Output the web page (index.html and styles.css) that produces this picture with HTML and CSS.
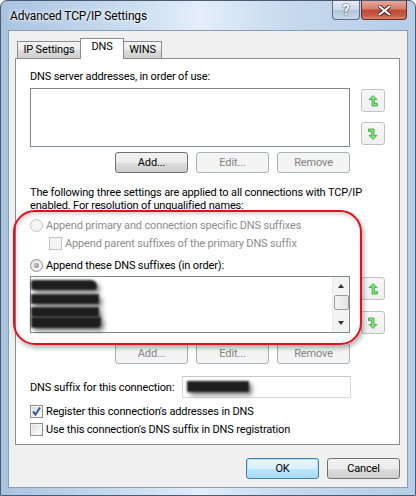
FILE: index.html
```html
<!DOCTYPE html>
<html lang="en">
<head>
    <meta charset="UTF-8">
    <title>Advanced TCP/IP Settings</title>
    <link rel="stylesheet" href="styles.css">
</head>
<body>
    <div class="window">
        <!-- Title bar -->
        <div class="titlebar">
            <span class="title">Advanced TCP/IP Settings</span>
            <div class="caption-buttons">
                <div class="cap-btn help">?</div>
                <div class="cap-btn close">
                    <svg width="13" height="11" viewBox="0 0 13 11">
                        <path d="M1 1 L12 10 M12 1 L1 10" stroke="#5a1a1a" stroke-width="4" stroke-linecap="round"/>
                        <path d="M1.5 1.5 L11.5 9.5 M11.5 1.5 L1.5 9.5" stroke="#fff" stroke-width="2.2" stroke-linecap="round"/>
                    </svg>
                </div>
            </div>
        </div>

        <div class="client">
            <!-- Tabs -->
            <div class="tabs">
                <div class="tab">IP Settings</div>
                <div class="tab active-tab">DNS</div>
                <div class="tab">WINS</div>
            </div>

            <div class="tab-page">
                <div class="label">DNS server addresses, in order of use:</div>
                <div class="list-row">
                    <div class="listbox"></div>
                    <div class="arrows first">
                        <div class="arrow-btn">
                            <svg width="10" height="12" viewBox="0 0 10 12"><path class="arrow-up" d="M5 0.5 L9 4.5 L6.5 4.5 L6.5 8.5 L9.5 8.5 L9.5 11 L4 11 L4 4.5 L1 4.5 Z"/></svg>
                        </div>
                        <div class="arrow-btn">
                            <svg width="10" height="12" viewBox="0 0 10 12"><path class="arrow-up" d="M5 11.5 L1 7.5 L3.5 7.5 L3.5 3.5 L0.5 3.5 L0.5 1 L6 1 L6 7.5 L9 7.5 Z"/></svg>
                        </div>
                    </div>
                </div>
                <div class="btn-row">
                    <div class="btn">Add...</div>
                    <div class="btn disabled">Edit...</div>
                    <div class="btn disabled">Remove</div>
                </div>

                <p class="note">The following three settings are applied to all connections with TCP/IP<br>enabled. For resolution of unqualified names:</p>

                <div class="option first-option disabled"><span class="radio"></span>Append primary and connection specific DNS suffixes</div>
                <div class="option sub disabled"><span class="check"></span>Append parent suffixes of the primary DNS suffix</div>
                <div class="option third-option"><span class="radio selected"></span>Append these DNS suffixes (in order):</div>

                <div class="list-row second">
                    <div class="listbox short">
                        <div class="suffixes">
                            <span class="blob b1"></span>
                            <span class="blob b2"></span>
                            <span class="blob b3"></span>
                            <span class="blob b4"></span>
                        </div>
                        <div class="scrollbar">
                            <span class="sb-up"></span>
                            <span class="sb-thumb"></span>
                            <span class="sb-down"></span>
                        </div>
                    </div>
                    <div class="arrows second">
                        <div class="arrow-btn">
                            <svg width="10" height="12" viewBox="0 0 10 12"><path class="arrow-up" d="M5 0.5 L9 4.5 L6.5 4.5 L6.5 8.5 L9.5 8.5 L9.5 11 L4 11 L4 4.5 L1 4.5 Z"/></svg>
                        </div>
                        <div class="arrow-btn">
                            <svg width="10" height="12" viewBox="0 0 10 12"><path class="arrow-up" d="M5 11.5 L1 7.5 L3.5 7.5 L3.5 3.5 L0.5 3.5 L0.5 1 L6 1 L6 7.5 L9 7.5 Z"/></svg>
                        </div>
                    </div>
                </div>
                <div class="btn-row second">
                    <div class="btn disabled">Add...</div>
                    <div class="btn disabled">Edit...</div>
                    <div class="btn disabled">Remove</div>
                </div>

                <div class="suffix-row">
                    <span>DNS suffix for this connection:</span>
                    <div class="textbox"><span class="blob b5"></span></div>
                </div>

                <div class="option check-row first-check"><span class="check checked">
                    <svg width="11" height="11" viewBox="0 0 11 11"><path d="M2 5.5 L4.5 8.5 L9 1.5" fill="none" stroke="#3b5aa5" stroke-width="2"/></svg>
                </span>Register this connection's addresses in DNS</div>
                <div class="option check-row"><span class="check"></span>Use this connection's DNS suffix in DNS registration</div>

                <!-- red annotation drawn over the suffix settings -->
                <div class="annotation"></div>
            </div>

            <div class="footer">
                <div class="btn default">OK</div>
                <div class="btn">Cancel</div>
            </div>
        </div>
    </div>
</body>
</html>
```

FILE: styles.css
```css
/* Basic reset */
* {
    margin: 0;
    padding: 0;
    box-sizing: border-box;
}

body {
    width: 416px;
    height: 496px;
    font-family: Roboto, "Liberation Sans", sans-serif;
    font-size: 11px;
    letter-spacing: -0.15px;
    color: #000;
    background: #fff;
    white-space: nowrap;
}

/* Window frame */
.window {
    width: 416px;
    height: 496px;
    display: flex;
    flex-direction: column;
    border: 1px solid #4a5a70;
    border-radius: 7px 7px 0 0;
    background: linear-gradient(to right, #a9c3df 0%, #c9dcf0 30%, #e3eef9 48%, #c6d9ee 70%, #b5cde8 100%);
}

.titlebar {
    height: 29px;
    display: flex;
    align-items: flex-start;
    justify-content: space-between;
}

.title {
    margin-top: 8px;
    margin-left: 9px;
    font-size: 12px;
    text-shadow: 0 0 6px #fff, 0 0 3px #fff;
}

.caption-buttons {
    display: flex;
    gap: 1px;
    margin-right: 8px;
}

.cap-btn {
    height: 19px;
    display: flex;
    align-items: center;
    justify-content: center;
    border: 1px solid #5d6f86;
    border-top: none;
    border-radius: 0 0 4px 4px;
}

.help {
    width: 28px;
    background: linear-gradient(#e6eef8, #cad8e9 50%, #b3c5dc 51%, #c7d7ea);
    color: #fff;
    font-size: 14px;
    font-weight: bold;
    text-shadow: 0 0 2px #3a4a60, 0 0 1px #3a4a60;
}

.close {
    width: 46px;
    border-color: #6a2a28;
    background: linear-gradient(#e7a99c, #d27c6c 45%, #c0483a 50%, #c65a44 80%, #d6876a);
}

/* Client area */
.client {
    flex: 1;
    margin: 0 7px 7px;
    background: #f0f0f0;
    border: 1px solid #8a9cb4;
    padding: 7px 7px 8px 6px;
    display: flex;
    flex-direction: column;
}

.tabs {
    display: flex;
    align-items: flex-end;
    height: 20px;
    padding-left: 2px;
}

.tab {
    height: 17px;
    line-height: 15px;
    text-align: center;
    border: 1px solid #898c95;
    border-bottom: none;
    border-right: none;
    background: linear-gradient(#f3f3f3, #ebebeb 50%, #dddddd 51%, #cfcfcf);
}

.tab:first-child {
    width: 63px;
}

.tab:last-child {
    width: 38px;
    border-right: 1px solid #898c95;
}

.active-tab {
    width: 44px;
    height: 21px;
    margin-bottom: -1px;
    position: relative;
    z-index: 1;
    background: #fff;
    border-right: 1px solid #898c95;
    line-height: 15px;
}

.active-tab + .tab {
    border-left: none;
}

.tab-page {
    position: relative;
    height: 387px;
    background: #fff;
    border: 1px solid #898c95;
    padding: 11px 13px 0 14px;
}

.label {
    height: 14px;
    line-height: 14px;
}

.list-row {
    display: flex;
    gap: 11px;
    margin-top: 4px;
}

.listbox {
    width: 320px;
    height: 59px;
    border: 1px solid #828790;
    background: #fff;
}

.arrows {
    display: flex;
    flex-direction: column;
    gap: 10px;
    padding-top: 1px;
}

.arrows.second {
    gap: 11px;
}

.arrow-btn {
    width: 24px;
    height: 23px;
    display: flex;
    align-items: center;
    justify-content: center;
    border: 1px solid #c2c2c2;
    border-radius: 3px;
    background: linear-gradient(#f7f7f7, #efefef);
}

.arrow-up {
    fill: #7fe07f;
    stroke: #34a934;
    stroke-width: 0.8;
}

/* Push buttons */
.btn-row {
    width: 320px;
    display: flex;
    justify-content: flex-end;
    gap: 8px;
    margin-top: 5px;
}

.btn-row.second {
    margin-top: 9px;
}

.btn {
    width: 73px;
    height: 21px;
    line-height: 19px;
    text-align: center;
    border: 1px solid #707070;
    border-radius: 3px;
    background: linear-gradient(#f2f2f2, #ebebeb 50%, #dddddd 51%, #cfcfcf);
}

.btn.disabled {
    border-color: #adb2b5;
    background: #f4f4f4;
    color: #838383;
}

.btn.default {
    border-color: #3c7fb1;
    background: linear-gradient(#eaf6fd, #d9f0fc 50%, #bee6fd 51%, #a7d9f5);
    box-shadow: inset 0 0 0 1px #aee0f9;
}

.note {
    margin-top: 13px;
    line-height: 13px;
}

/* Radio and checkbox rows */
.option {
    height: 16px;
    display: flex;
    align-items: center;
    gap: 3px;
    margin-top: 2px;
}

.option.first-option {
    margin-top: 5px;
}

.option.third-option {
    margin-top: 6px;
}

.option.sub {
    padding-left: 19px;
}

.option.disabled {
    color: #8d8d8d;
}

.radio {
    width: 13px;
    height: 13px;
    border-radius: 50%;
    border: 1px solid #929292;
    background: radial-gradient(circle at 60% 60%, #ffffff, #dcdcdc);
    display: flex;
    align-items: center;
    justify-content: center;
}

.disabled .radio {
    border-color: #c4c4c4;
    background: #f4f4f4;
}

.radio.selected::after {
    content: "";
    width: 5px;
    height: 5px;
    border-radius: 50%;
    background: radial-gradient(circle at 40% 40%, #c8c8c8, #7a7a7a);
}

.check {
    width: 13px;
    height: 13px;
    border: 1px solid #8e8f8f;
    background: linear-gradient(135deg, #dcdcdc, #ffffff);
    box-shadow: inset 0 0 0 1px #f4f4f4;
    display: flex;
    align-items: center;
    justify-content: center;
}

.disabled .check {
    border-color: #c4c4c4;
    background: #f4f4f4;
}

.check-row {
    height: 18px;
    margin-top: 0;
}

.check-row.first-check {
    margin-top: 4px;
}

/* Second listbox with suffixes and scroll bar */
.list-row.second {
    margin-top: 3px;
}

.listbox.short {
    height: 57px;
    display: flex;
    justify-content: space-between;
}

.suffixes {
    padding: 3px 0 0 0;
    display: flex;
    flex-direction: column;
}

.blob {
    display: block;
    background: #1e1e1e;
    filter: blur(1px);
    box-shadow: 3px 3px 4px rgba(0, 0, 0, 0.5);
}

.b1 {
    width: 66px;
    height: 10px;
    border-radius: 2px 6px 3px 2px;
}

.b2 {
    width: 68px;
    height: 10px;
    margin-top: 4px;
}

.b3 {
    width: 68px;
    height: 10px;
    margin-top: 3px;
}

.b4 {
    width: 70px;
    height: 11px;
    border-radius: 0 0 4px 2px;
}

.scrollbar {
    width: 17px;
    display: flex;
    flex-direction: column;
    align-items: center;
    background: #f3f3f3;
    border-left: 1px solid #ececec;
}

.sb-up,
.sb-down {
    width: 0;
    height: 0;
    border-left: 3px solid transparent;
    border-right: 3px solid transparent;
}

.sb-up {
    margin-top: 7px;
    border-bottom: 4px solid #333;
}

.sb-down {
    margin-top: auto;
    margin-bottom: 7px;
    border-top: 4px solid #333;
}

.sb-thumb {
    width: 15px;
    height: 15px;
    margin-top: 7px;
    border: 1px solid #9c9c9c;
    border-radius: 2px;
    background: linear-gradient(to right, #f4f4f4, #e4e4e4);
}

.suffix-row {
    width: 321px;
    display: flex;
    align-items: center;
    justify-content: space-between;
    margin-top: 12px;
}

.textbox {
    width: 169px;
    height: 22px;
    border: 1px solid #dadada;
    border-top-color: #c8c8c8;
    padding: 4px 0 0 4px;
}

.b5 {
    width: 62px;
    height: 11px;
}

/* Red highlight drawn around the suffix options */
.annotation {
    position: absolute;
    left: -3px;
    top: 151px;
    width: 349px;
    height: 135px;
    border: 2px solid #e3101c;
    border-radius: 22px;
    box-shadow: 2px 3px 5px rgba(0, 0, 0, 0.3), inset 1px 2px 4px rgba(0, 0, 0, 0.2);
    pointer-events: none;
}

.footer {
    display: flex;
    justify-content: flex-end;
    gap: 8px;
    margin-top: auto;
}
```
